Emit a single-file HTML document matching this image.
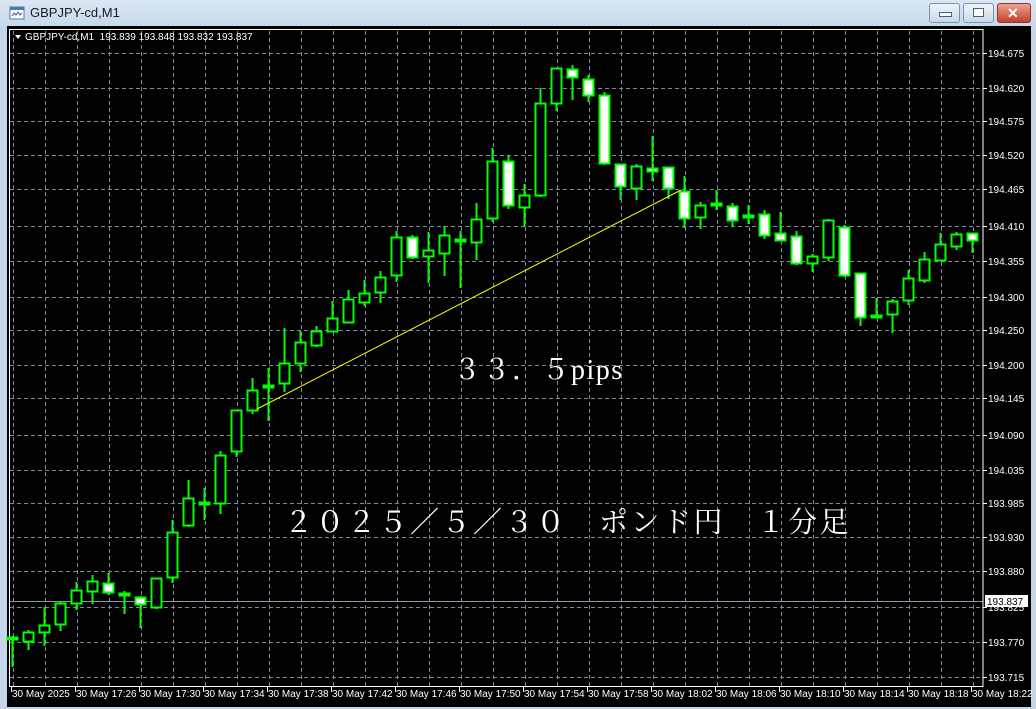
<!DOCTYPE html>
<html><head><meta charset="utf-8"><style>
html,body{margin:0;padding:0;width:1036px;height:709px;overflow:hidden;background:#c4d6ea;font-family:"Liberation Sans",sans-serif}
.title{position:absolute;left:0;top:0;width:1036px;height:27px;background:linear-gradient(#dbe7f4,#c6d8ec)}
.title span{position:absolute;left:30px;top:5px;font-size:13px;color:#1a1a1a}
.btn{position:absolute;top:3px;height:18px;border:1px solid #7d93ad;border-radius:3px;background:linear-gradient(#f0f5fb,#c9d8ea)}
svg.main{position:absolute;left:0;top:0}
</style></head><body>
<div class="title">
<svg style="position:absolute;left:9px;top:5px" width="16" height="16"><rect x="1" y="2" width="14" height="12" fill="#fff" stroke="#4d78b0"/><rect x="1" y="2" width="14" height="3" fill="#4d78b0"/><path d="M3 11 L5 8 L7 10 L9 7 L11 10 L13 8" stroke="#2a5a9a" fill="none"/></svg>
<span>GBPJPY-cd,M1</span>
<div class="btn" style="left:929px;width:29px"><div style="position:absolute;left:9px;top:8px;width:11px;height:3px;background:#fff;border:1px solid #4a5f78"></div></div>
<div class="btn" style="left:963px;width:29px"><div style="position:absolute;left:9px;top:4px;width:9px;height:7px;background:#fff;border:1px solid #4a5f78"></div></div>
<div class="btn" style="left:997px;width:32px;background:linear-gradient(#e9a393,#c4402b);border-color:#8a3a2e"><div style="position:absolute;left:9px;top:1px;color:#fff;font-weight:bold;font-size:14px">✕</div></div>
</div>
<svg class="main" width="1036" height="709" xmlns="http://www.w3.org/2000/svg">
<rect x="7" y="26" width="1024" height="681" fill="#000"/>
<path stroke="#7e8a9c" stroke-dasharray="4,3" fill="none" d="M10 53.5H983M10 88.5H983M10 121.5H983M10 155.5H983M10 189.5H983M10 226.5H983M10 261.5H983M10 297.5H983M10 330.5H983M10 365.5H983M10 398.5H983M10 435.5H983M10 470.5H983M10 503.5H983M10 537.5H983M10 571.5H983M10 607.5H983M10 642.5H983M10 677.5H983
M13.5 31V686M45.5 31V686M77.5 31V686M109.5 31V686M141.5 31V686M173.5 31V686M205.5 31V686M237.5 31V686M269.5 31V686M301.5 31V686M333.5 31V686M365.5 31V686M397.5 31V686M429.5 31V686M461.5 31V686M493.5 31V686M525.5 31V686M557.5 31V686M589.5 31V686M621.5 31V686M653.5 31V686M685.5 31V686M717.5 31V686M749.5 31V686M781.5 31V686M813.5 31V686M845.5 31V686M877.5 31V686M909.5 31V686M941.5 31V686M973.5 31V686"/>
<path stroke="#fff" d="M983 53.5h4M983 88.5h4M983 121.5h4M983 155.5h4M983 189.5h4M983 226.5h4M983 261.5h4M983 297.5h4M983 330.5h4M983 365.5h4M983 398.5h4M983 435.5h4M983 470.5h4M983 503.5h4M983 537.5h4M983 571.5h4M983 607.5h4M983 642.5h4M983 677.5h4
M11.5 687v5M75.5 687v5M139.5 687v5M203.5 687v5M267.5 687v5M331.5 687v5M395.5 687v5M459.5 687v5M523.5 687v5M587.5 687v5M651.5 687v5M715.5 687v5M779.5 687v5M843.5 687v5M907.5 687v5M971.5 687v5"/>
<g font-family="Liberation Sans, sans-serif" font-size="10" fill="#fff">
<text x="988" y="57">194.675</text><text x="988" y="92">194.620</text><text x="988" y="125">194.575</text><text x="988" y="159">194.520</text><text x="988" y="193">194.465</text><text x="988" y="230">194.410</text><text x="988" y="265">194.355</text><text x="988" y="301">194.300</text><text x="988" y="334">194.250</text><text x="988" y="369">194.200</text><text x="988" y="402">194.145</text><text x="988" y="439">194.090</text><text x="988" y="474">194.035</text><text x="988" y="507">193.985</text><text x="988" y="541">193.930</text><text x="988" y="575">193.880</text><text x="988" y="611">193.825</text><text x="988" y="646">193.770</text><text x="988" y="681">193.715</text>
<text x="12" y="697">30 May 2025</text><text x="76" y="697">30 May 17:26</text><text x="140" y="697">30 May 17:30</text><text x="204" y="697">30 May 17:34</text><text x="268" y="697">30 May 17:38</text><text x="332" y="697">30 May 17:42</text><text x="396" y="697">30 May 17:46</text><text x="460" y="697">30 May 17:50</text><text x="524" y="697">30 May 17:54</text><text x="588" y="697">30 May 17:58</text><text x="652" y="697">30 May 18:02</text><text x="716" y="697">30 May 18:06</text><text x="780" y="697">30 May 18:10</text><text x="844" y="697">30 May 18:14</text><text x="908" y="697">30 May 18:18</text><text x="972" y="697">30 May 18:22</text>
<text x="25" y="40" xml:space="preserve">GBPJPY-cd,M1  193.839 193.848 193.832 193.837</text>
</g>
<path d="M15 35 L21 35 L18 39 Z" fill="#fff"/>
<path stroke="#8d99a8" d="M10 601.5H983"/>
<rect x="985" y="595" width="43" height="12" fill="#fff"/>
<text x="987" y="605" fill="#000" font-size="10" font-family="Liberation Sans, sans-serif">193.837</text>
<rect x="9.5" y="29.5" width="973.5" height="657" fill="none" stroke="#fff"/>
<path stroke="#00ff00" stroke-width="2" d="M12.5 636V667M28.5 630V650M44.5 607V646M60.5 602V631M76.5 582V610M92.5 575V604M108.5 573V595M124.5 591V614M140.5 596V628M156.5 578V609M172.5 520V583M188.5 480V527M204.5 488V520M220.5 451V514M236.5 410V457M252.5 378V414M268.5 368V421M284.5 328V392M300.5 331V372M316.5 326V347M332.5 301V332M348.5 290V322M364.5 280V306M380.5 271V303M396.5 231V282M412.5 235V259M428.5 232V283M444.5 226V276M460.5 231V288M476.5 203V260M492.5 148V222M508.5 155V209M524.5 184V227M540.5 88V197M556.5 68V111M572.5 65V100M588.5 75V102M604.5 92V165M620.5 164V200M636.5 164V200M652.5 136V181M668.5 167V199M684.5 176V228M700.5 202V229M716.5 190V210M732.5 203V227M748.5 205V224M764.5 210V239M780.5 212V240M796.5 231V265M812.5 254V272M828.5 219V261M844.5 225V277M860.5 273V326M876.5 298V318M892.5 299V333M908.5 270V305M924.5 252V283M940.5 233V260M956.5 232V250M972.5 233V253"/>
<g fill="#000" stroke="#00ff00" stroke-width="2">
<rect x="7.5" y="637.5" width="10" height="2"/><rect x="23.5" y="632.5" width="10" height="9"/><rect x="39.5" y="625.5" width="10" height="7"/><rect x="55.5" y="603.5" width="10" height="21"/><rect x="71.5" y="590.5" width="10" height="13"/><rect x="87.5" y="581.5" width="10" height="10"/><rect x="119.5" y="593.5" width="10" height="2"/><rect x="151.5" y="578.5" width="10" height="29"/><rect x="167.5" y="532.5" width="10" height="45"/><rect x="183.5" y="498.5" width="10" height="27"/><rect x="215.5" y="455.5" width="10" height="48"/><rect x="231.5" y="410.5" width="10" height="41"/><rect x="247.5" y="390.5" width="10" height="20"/><rect x="279.5" y="363.5" width="10" height="20"/><rect x="295.5" y="342.5" width="10" height="21"/><rect x="311.5" y="331.5" width="10" height="14"/><rect x="327.5" y="318.5" width="10" height="13"/><rect x="343.5" y="299.5" width="10" height="23"/><rect x="359.5" y="293.5" width="10" height="9"/><rect x="375.5" y="277.5" width="10" height="15"/><rect x="391.5" y="237.5" width="10" height="38"/><rect x="423.5" y="250.5" width="10" height="6"/><rect x="439.5" y="235.5" width="10" height="18"/><rect x="455.5" y="239.5" width="10" height="2"/><rect x="471.5" y="219.5" width="10" height="23"/><rect x="487.5" y="161.5" width="10" height="57"/><rect x="519.5" y="195.5" width="10" height="12"/><rect x="535.5" y="103.5" width="10" height="92"/><rect x="551.5" y="68.5" width="10" height="35"/><rect x="631.5" y="166.5" width="10" height="22"/><rect x="695.5" y="205.5" width="10" height="12"/><rect x="711.5" y="203.5" width="10" height="2"/><rect x="743.5" y="215.5" width="10" height="2"/><rect x="807.5" y="256.5" width="10" height="7"/><rect x="823.5" y="220.5" width="10" height="37"/><rect x="887.5" y="301.5" width="10" height="13"/><rect x="903.5" y="278.5" width="10" height="22"/><rect x="919.5" y="259.5" width="10" height="21"/><rect x="935.5" y="244.5" width="10" height="16"/><rect x="951.5" y="234.5" width="10" height="12"/>
</g>
<g fill="#fff" stroke="#00ff00" stroke-width="2">
<rect x="103.5" y="583.5" width="10" height="9"/><rect x="135.5" y="597.5" width="10" height="7"/><rect x="199.5" y="502.5" width="10" height="2"/><rect x="263.5" y="385.5" width="10" height="2"/><rect x="407.5" y="237.5" width="10" height="20"/><rect x="503.5" y="161.5" width="10" height="44"/><rect x="567.5" y="69.5" width="10" height="8"/><rect x="583.5" y="79.5" width="10" height="16"/><rect x="599.5" y="95.5" width="10" height="68"/><rect x="615.5" y="164.5" width="10" height="22"/><rect x="647.5" y="168.5" width="10" height="3"/><rect x="663.5" y="167.5" width="10" height="21"/><rect x="679.5" y="191.5" width="10" height="27"/><rect x="727.5" y="206.5" width="10" height="14"/><rect x="759.5" y="214.5" width="10" height="21"/><rect x="775.5" y="233.5" width="10" height="7"/><rect x="791.5" y="236.5" width="10" height="27"/><rect x="839.5" y="227.5" width="10" height="48"/><rect x="855.5" y="273.5" width="10" height="44"/><rect x="871.5" y="315.5" width="10" height="2"/><rect x="967.5" y="233.5" width="10" height="7"/>
</g>
<line x1="257" y1="409" x2="681" y2="190" stroke="#ffff00" stroke-width="1"/>
<text x="453" y="379" fill="#fff" font-size="28" letter-spacing="1.5" font-family="Liberation Serif, Noto Serif CJK JP, serif">３３．５pips</text>
<text x="284" y="532" fill="#fff" font-size="29" letter-spacing="2.5" font-family="Liberation Serif, Noto Serif CJK JP, serif">２０２５／５／３０　ポンド円　１分足</text>
</svg>
</body></html>
